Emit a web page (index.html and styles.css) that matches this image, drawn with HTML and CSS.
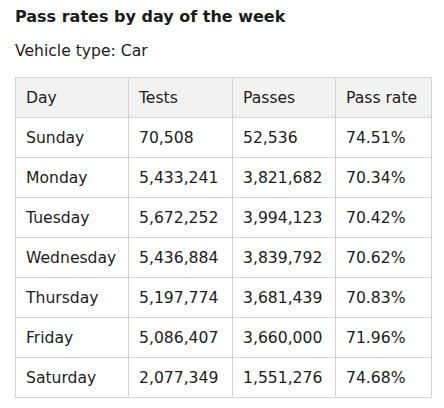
FILE: index.html
```html
<!DOCTYPE html>
<html>

<head>
  <meta content="width=device-width, initial-scale=1">
  <link rel="stylesheet" href="styles.css">
</head>

<body>
  <div id="Rates">
    <h3>Pass rates by day of the week</h3>
    <p class="subtitle">Vehicle type: Car</p>
    <table class="rates">
      <col class="c-day" />
      <col class="c-tests" />
      <col class="c-passes" />
      <col class="c-rate" />
      <tr>
        <th>Day</th>
        <th>Tests</th>
        <th>Passes</th>
        <th>Pass rate</th>
      </tr>
      <tr><td>Sunday</td><td>70,508</td><td>52,536</td><td>74.51%</td></tr>
      <tr><td>Monday</td><td>5,433,241</td><td>3,821,682</td><td>70.34%</td></tr>
      <tr><td>Tuesday</td><td>5,672,252</td><td>3,994,123</td><td>70.42%</td></tr>
      <tr><td>Wednesday</td><td>5,436,884</td><td>3,839,792</td><td>70.62%</td></tr>
      <tr><td>Thursday</td><td>5,197,774</td><td>3,681,439</td><td>70.83%</td></tr>
      <tr><td>Friday</td><td>5,086,407</td><td>3,660,000</td><td>71.96%</td></tr>
      <tr><td>Saturday</td><td>2,077,349</td><td>1,551,276</td><td>74.68%</td></tr>
    </table>
  </div>
</body>

</html>
```
FILE: styles.css
```css
body {
  margin: 0;
  padding: 0 15px;
  font-family: "DejaVu Sans", Verdana, sans-serif;
  font-size: 15.6px;
  color: #1c1c1c;
  background: #fff;
}

h3 {
  margin: 0;
  padding-top: 7px;
  font-size: 16px;
  line-height: 20px;
  font-weight: bold;
}

.subtitle {
  margin: 14px 0 16px 0;
  line-height: 20px;
}

.rates {
  border-collapse: collapse;
  table-layout: fixed;
  width: 416px;
}

.c-day { width: 113px; }
.c-tests { width: 104px; }
.c-passes { width: 103px; }
.c-rate { width: 96px; }

.rates th,
.rates td {
  border: 1px solid #d4d4d4;
  height: 40px;
  padding: 0 0 0 10px;
  text-align: left;
  font-weight: normal;
  white-space: nowrap;
  box-sizing: border-box;
}

.rates th {
  background-color: #f2f2f2;
}
```
